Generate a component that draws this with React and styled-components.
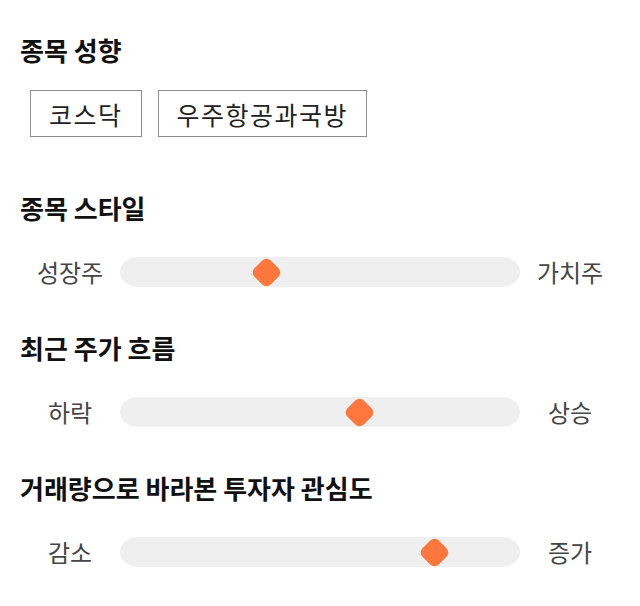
import React from "react";
import styled, { createGlobalStyle } from "styled-components";

const Global = createGlobalStyle`
  html, body { margin: 0; padding: 0; background: #fff; }
  body { font-family: "Noto Sans CJK KR", "Noto Sans", sans-serif; }
`;

const Page = styled.div`
  width: 640px;
  padding-top: 35px;
  box-sizing: border-box;
`;

const Section = styled.section`
  display: flex;
  flex-direction: column;
  margin-bottom: ${(p) => p.$after || 0}px;
`;

const Heading = styled.h2`
  margin: 0 0 ${(p) => p.$gap}px;
  padding-left: 20px;
  font-size: 26px;
  line-height: 30px;
  font-weight: 700;
  color: #111;
`;

const Chips = styled.div`
  display: flex;
  gap: 16px;
  padding-left: 30px;
`;

const Chip = styled.div`
  height: 47px;
  box-sizing: border-box;
  border: 1px solid #8c8c8c;
  padding: 0 18px;
  display: flex;
  align-items: center;
  font-size: 25px;
  letter-spacing: 1.5px;
  color: #222;
`;

const Row = styled.div`
  display: flex;
  align-items: center;
  padding: 0 20px;
  height: 30px;
`;

const Label = styled.span`
  width: 100px;
  flex: none;
  text-align: center;
  font-size: 24px;
  line-height: 30px;
  color: #454545;
`;

const Track = styled.div`
  position: relative;
  flex: 1;
  height: 30px;
  background: #efefef;
  border-radius: 18px / 15px;
`;

const Thumb = styled.div`
  position: absolute;
  top: 50%;
  width: 23px;
  height: 23px;
  margin: -11.5px 0 0 -11.5px;
  background: #ff773d;
  border-radius: 6px;
  transform: rotate(45deg);
`;

const sliders = [
  { title: "종목 스타일", left: "성장주", right: "가치주", pos: 146 },
  { title: "최근 주가 흐름", left: "하락", right: "상승", pos: 239.5 },
  { title: "거래량으로 바라본 투자자 관심도", left: "감소", right: "증가", pos: 314.5 },
];

export default function App() {
  return (
    <>
      <Global />
      <Page>
        <Section $after={56}>
          <Heading $gap={25}>종목 성향</Heading>
          <Chips>
            <Chip>코스닥</Chip>
            <Chip>우주항공과국방</Chip>
          </Chips>
        </Section>
        {sliders.map((s, i) => (
          <Section key={s.title} $after={i < 2 ? 46 : 0}>
            <Heading $gap={34}>{s.title}</Heading>
            <Row>
              <Label>{s.left}</Label>
              <Track>
                <Thumb style={{ left: `${s.pos}px` }} />
              </Track>
              <Label>{s.right}</Label>
            </Row>
          </Section>
        ))}
      </Page>
    </>
  );
}
